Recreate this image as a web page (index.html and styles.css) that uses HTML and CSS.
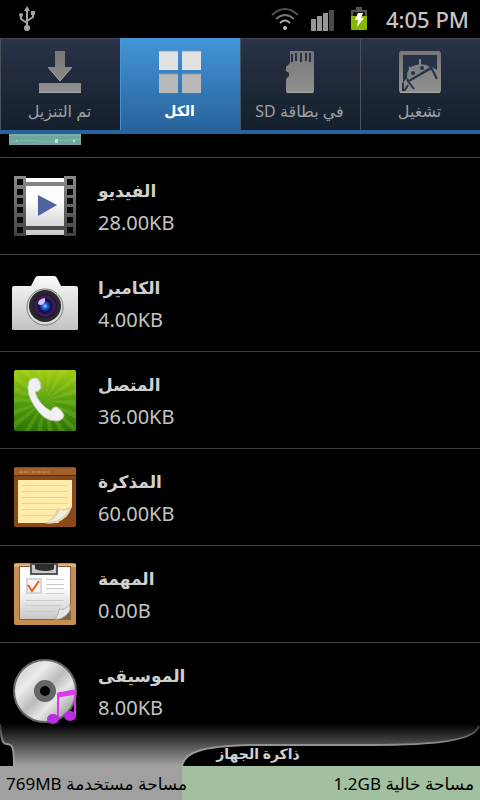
FILE: index.html
```html
<!DOCTYPE html>
<html lang="ar">
<head>
    <meta charset="UTF-8">
    <meta name="viewport" content="width=device-width, initial-scale=1.0">
    <title>ذاكرة الجهاز</title>
    <link rel="stylesheet" href="styles.css">
</head>
<body>
    <header class="status-bar">
        <svg class="usb" width="18" height="26" viewBox="0 0 18 26" fill="none" stroke="#a3a3a3" stroke-width="2">
            <path d="M9 3v19M9 17L3 13V9M9 15l6-4V8"/>
            <path d="M9 0l3 5H6zM13 5h4v4h-4z" fill="#a3a3a3" stroke="none"/>
            <circle cx="3" cy="9" r="2" fill="#a3a3a3" stroke="none"/>
            <circle cx="9" cy="22" r="3" fill="#a3a3a3" stroke="none"/>
        </svg>
        <div class="status-icons">
            <svg width="28" height="24" viewBox="0 0 28 24" fill="none" stroke-width="2">
                <path d="M1 8Q14-4 27 8" stroke="#505050"/>
                <path d="M5 12q9-8 18 0" stroke="#747474"/>
                <path d="M9 16q5-5 10 0" stroke="#aaa"/>
                <circle cx="14" cy="21" r="2" fill="#c4c4c4"/>
            </svg>
            <svg width="24" height="24" viewBox="0 0 24 24">
                <path d="M1 12h5v12H1zM7 9h5v15H7zM13 6h5v18h-5z" fill="#989898"/>
                <path d="M19 3h5v21h-5z" fill="#4b4b4b"/>
            </svg>
            <svg width="18" height="24" viewBox="0 0 18 24">
                <path d="M6 0h6v3h5v7H1V3h5z" fill="#555"/>
                <path d="M3 5h12v5H3z" fill="#161616"/>
                <path d="M1 9h16v13q0 1-1 1H2q-1 0-1-1z" fill="#86b800"/>
                <path d="M8 6h5l-2 5h3l-7 9 1-7H5z" fill="#fff"/>
            </svg>
            <span class="clock">4:05 PM</span>
        </div>
    </header>

    <nav class="tabs">
        <button class="tab" dir="rtl">
            <svg width="44" height="44" viewBox="0 0 44 44">
                <defs>
                    <linearGradient id="metal" x1="0" y1="0" x2="0" y2="1">
                        <stop offset="0" stop-color="#777"/>
                        <stop offset="1" stop-color="#909090"/>
                    </linearGradient>
                </defs>
                <path d="M17 1h10v16h7L22 31 10 17h7zM1 33h42v10H1z" fill="url(#metal)"/>
                <path d="M10 17l12 14 12-14M1 42.500h42" fill="none" stroke="#aaa"/>
            </svg>
            <span>تم التنزيل</span>
        </button>
        <button class="tab active" dir="rtl">
            <svg width="44" height="44" viewBox="0 0 44 44">
                <path d="M1 1h19v19H1zM24 1h19v19H24z" fill="#e2e2e2"/>
                <path d="M1 24h19v19H1zM24 24h19v19H24z" fill="#b9b9b9"/>
                <path d="M1 1h19M24 1h19M1 24h19M24 24h19" stroke="#8c9aa6"/>
            </svg>
            <span>الكل</span>
        </button>
        <button class="tab" dir="rtl">
            <svg width="44" height="44" viewBox="0 0 44 44">
                <path d="M12 1h22q2 0 2 2v38q0 2-2 2H10q-2 0-2-2V29l3-3v-3l-3-2v-4l4-4z" fill="url(#metal)"/>
                <path d="M14 4v8M18 3v8M23 3v9M28 3v8M32 3v9" stroke="#243044" stroke-width="2"/>
                <path d="M9 42.500h26" stroke="#aaa"/>
            </svg>
            <span>في بطاقة SD</span>
        </button>
        <button class="tab" dir="rtl">
            <svg width="44" height="44" viewBox="0 0 44 44">
                <rect x="1" y="1" width="42" height="42" rx="3" fill="url(#metal)"/>
                <path d="M5 5h34v15l-5-3L11 31l-3-2-3 4z" fill="#263247"/>
                <path d="M9 28q-1-11 9-13 9-2 14 2L11 30z" fill="#808080"/>
                <path d="M11 17l3 4M22 9v6" stroke="#888" stroke-width="2"/>
                <path d="M11 31l23-13M33 17l6 12M5 33v7h2l3-5M9 30l7 9" fill="none" stroke="#263247" stroke-width="2"/>
                <circle cx="15" cy="23" r="2" fill="#263247"/>
                <circle cx="24" cy="18" r="2" fill="#263247"/>
                <path d="M2 42.500h40" stroke="#aaa"/>
            </svg>
            <span>تشغيل</span>
        </button>
    </nav>

    <ul class="folders">
        <li class="folder partial">
            <svg width="72" height="12" viewBox="0 0 72 12">
                <rect width="72" height="11" fill="#6fa6a0"/>
                <path d="M0 1h72M0 8l20-2 18 2 34-3" stroke="#84b8b1" fill="none"/>
                <path d="M46 5h3v4h-3zM64 6h2v2h-2zM7 6h1v1H7z" fill="#b9dee3"/>
            </svg>
        </li>
        <li class="folder">
            <svg width="66" height="66" viewBox="0 0 66 66">
                <defs>
                    <linearGradient id="film" x1="0" y1="0" x2="0" y2="1">
                        <stop offset="0" stop-color="#8c8c8c"/>
                        <stop offset="1" stop-color="#424242"/>
                    </linearGradient>
                    <linearGradient id="white" x1="0" y1="0" x2="0" y2="1">
                        <stop offset="0.400" stop-color="#fdfdfd"/>
                        <stop offset="1" stop-color="#c9c9c9"/>
                    </linearGradient>
                </defs>
                <path d="M12 4h42v57H12z" fill="url(#white)"/>
                <path d="M2 2h12v60H2zM52 2h12v60H52zM14 8h38v4H14zM14 52h38v4H14z" fill="url(#film)"/>
                <path d="M5 5h6v6H5zM5 15h6v6H5zM5 24h6v6H5zM5 33h6v6H5zM5 43h6v6H5zM5 53h6v6H5zM55 5h6v6h-6zM55 15h6v6h-6zM55 24h6v6h-6zM55 33h6v6h-6zM55 43h6v6h-6zM55 53h6v6h-6z" fill="#080808"/>
                <path d="M26 21l19 10-19 11z" fill="#50649f"/>
            </svg>
            <div class="info"><bdi class="name">الفيديو</bdi><span class="size">28.00KB</span></div>
        </li>
        <li class="folder">
            <svg width="66" height="66" viewBox="0 -2 66 66">
                <defs>
                    <linearGradient id="body" x1="0" y1="0" x2="0" y2="1">
                        <stop offset="0" stop-color="#fafafa"/>
                        <stop offset="1" stop-color="#c2c2c2"/>
                    </linearGradient>
                    <radialGradient id="lens">
                        <stop offset="0" stop-color="#9fd8ff"/>
                        <stop offset="0.200" stop-color="#2865ee"/>
                        <stop offset="0.500" stop-color="#0b123b"/>
                        <stop offset="0.800" stop-color="#461a65"/>
                        <stop offset="1" stop-color="#161020"/>
                    </radialGradient>
                </defs>
                <path d="M2 13h17l4-8q1-2 3-2h16q2 0 3 2l4 8h15q2 0 2 2v41q0 1-2 1H2q-2 0-2-1V15q0-2 2-2z" fill="url(#body)"/>
                <circle cx="33" cy="34" r="18" fill="#dedede" stroke="#777"/>
                <circle cx="33" cy="33" r="16" fill="#292929"/>
                <circle cx="33" cy="33" r="12" fill="url(#lens)"/>
                <path d="M26 31q0-5 7-6v3q-1 4-5 4z" fill="#d9c6f2"/>
            </svg>
            <div class="info"><bdi class="name">الكاميرا</bdi><span class="size">4.00KB</span></div>
        </li>
        <li class="folder">
            <svg width="66" height="66" viewBox="0 0 66 66">
                <defs>
                    <linearGradient id="green" x1="0" y1="0" x2="0" y2="1">
                        <stop offset="0" stop-color="#a4cd13"/>
                        <stop offset="0.500" stop-color="#54a010"/>
                        <stop offset="1" stop-color="#2c7505"/>
                    </linearGradient>
                </defs>
                <rect x="2" y="2" width="62" height="61" rx="2" fill="url(#green)"/>
                <path d="M33 33L2 4v8zM33 33L10 2h6zM33 33L24 2h5zM33 33L36 2h5zM33 33L48 2h7zM33 33L64 6v7zM33 33l31-13v6zM33 33l31-1v6zM33 33l31 12v6zM33 33l31 26v4h-3zM33 33l20 30h-6zM33 33l8 30h-5zM33 33l-3 30h-5zM33 33L18 63h-6zM33 33L2 61v-7zM33 33L2 47v-5zM33 33L2 34v-5zM33 33L2 24v-5z" fill="#b8df42" opacity="0.200"/>
                <path d="M17 13q3-4 8-3 4 3 4 10-1 3-6 4 4 13 16 19 2-5 6-4 5 3 7 8-1 6-8 6-12 0-21-14Q13 25 17 13z" fill="#f1f1f1" stroke="#bdc7b6"/>
            </svg>
            <div class="info"><bdi class="name">المتصل</bdi><span class="size">36.00KB</span></div>
        </li>
        <li class="folder">
            <svg width="66" height="66" viewBox="0 0 66 66">
                <rect x="2" y="2" width="62" height="60" rx="2" fill="#884817"/>
                <path d="M2 3h62v7H2z" fill="#a4602b"/>
                <path d="M2 10.500h62" stroke="#5d2c0b"/>
                <path d="M7 7h11M20 7h17" stroke="#cb986c" stroke-dasharray="4 1"/>
                <path d="M6 15h54v27L46 58H6z" fill="#ffebaa"/>
                <path d="M10 20.500h46M10 26.500h46M10 32.500h46M10 38.500h46M10 44.500h38M10 50.500h32" stroke="#ead597"/>
                <path d="M32 58q11-4 13-15 7 3 15-2-3 12-14 16-8 3-14 1z" fill="#ddd4b4"/>
                <path d="M36 57q9-4 12-12 5 2 9-1-6 12-21 13z" fill="#f5efd9"/>
            </svg>
            <div class="info"><bdi class="name">المذكرة</bdi><span class="size">60.00KB</span></div>
        </li>
        <li class="folder">
            <svg width="66" height="66" viewBox="0 0 66 66">
                <rect x="2" y="1" width="62" height="62" rx="2" fill="#c68d50"/>
                <path d="M2 2h62v3H2z" fill="#e0b076"/>
                <path d="M7 4h52v54H7z" fill="#85623d"/>
                <path d="M8 5h50v38L44 57H8z" fill="url(#white)"/>
                <path d="M19 2h26v10H19z" fill="#cacaca" stroke="#555" stroke-width="2"/>
                <path d="M23 2h19v5q-3 2-9 2t-10-2z" fill="#2d2d2d"/>
                <rect x="14" y="16" width="16" height="16" fill="#d6d6d6"/>
                <rect x="16" y="18" width="12" height="12" fill="#f5f5f5"/>
                <path d="M16 23l4 6 7-10" fill="none" stroke="#ee5c13" stroke-width="2"/>
                <path d="M34 17.500h18M34 22.500h18M34 26.500h18M34 31.500h18M14 38.500h38M14 43.500h36M14 49.500h28" stroke="#ccc"/>
                <path d="M43 57q4-4 4-10 6 2 11-5v6q-4 7-11 9z" fill="#e6e6e6" stroke="#b4b4b4"/>
            </svg>
            <div class="info"><bdi class="name">المهمة</bdi><span class="size">0.00B</span></div>
        </li>
        <li class="folder">
            <svg width="66" height="66" viewBox="0 0 66 66">
                <defs>
                    <linearGradient id="disc" x1="0" y1="0" x2="1" y2="1">
                        <stop offset="0" stop-color="#bdbdbd"/>
                        <stop offset="0.300" stop-color="#ececec"/>
                        <stop offset="0.500" stop-color="#bbb"/>
                        <stop offset="0.650" stop-color="#e7e7e7"/>
                        <stop offset="1" stop-color="#777"/>
                    </linearGradient>
                </defs>
                <circle cx="33" cy="32" r="31" fill="url(#disc)" stroke="#686868" stroke-width="2"/>
                <circle cx="33" cy="32" r="8" fill="#000" stroke="#656565" stroke-width="6"/>
                <path d="M46 59V35l17-3v25" fill="none" stroke="#dc39ee" stroke-width="2"/>
                <path d="M46 36l17-3" stroke="#dc39ee" stroke-width="5"/>
                <ellipse cx="41" cy="60" rx="6" ry="5" fill="#b82ddf"/>
                <ellipse cx="58" cy="57" rx="6" ry="5" fill="#b82ddf"/>
            </svg>
            <div class="info"><bdi class="name">الموسيقى</bdi><span class="size">8.00KB</span></div>
        </li>
    </ul>

    <footer class="storage">
        <div class="storage-title" dir="rtl">
            <svg class="curve" viewBox="0 0 480 42" preserveAspectRatio="none">
                <defs>
                    <linearGradient id="fade" x1="0" y1="0" x2="0" y2="42" gradientUnits="userSpaceOnUse">
                        <stop offset="0" stop-color="#000"/>
                        <stop offset="1" stop-color="#a0a0a0"/>
                    </linearGradient>
                    <linearGradient id="edge" x1="0" y1="0" x2="0" y2="42" gradientUnits="userSpaceOnUse">
                        <stop offset="0" stop-color="#333"/>
                        <stop offset="0.500" stop-color="#939393"/>
                        <stop offset="1" stop-color="#a0a0a0"/>
                    </linearGradient>
                </defs>
                <rect width="480" height="42" fill="#000"/>
                <path d="M0 0C1 8 1 20 6 20C13 20 14 23 14 42H182C184 29 200 22 250 21H370C435 21 474 17 479 0z" fill="url(#fade)"/>
                <path d="M0 0C1 8 1 20 6 20C13 20 14 23 14 42M182 42C184 29 200 22 250 21H370C435 21 474 17 479 2" fill="none" stroke="url(#edge)" stroke-width="2"/>
            </svg>
            <span>ذاكرة الجهاز</span>
        </div>
        <div class="storage-bar">
            <div class="used" style="width: 38%"></div>
            <span class="label" dir="rtl">مساحة مستخدمة 769MB</span>
            <span class="label" dir="rtl">مساحة خالية 1.2GB</span>
        </div>
    </footer>
</body>
</html>
```
FILE: styles.css
```css
* {
    box-sizing: border-box;
}
body {
    margin: 0;
    height: 100vh;
    display: flex;
    flex-direction: column;
    overflow: hidden;
    position: relative;
    background: #000;
    color: #d0d0d0;
    font-family: "Noto Sans", "DejaVu Sans", sans-serif;
}
svg {
    display: block;
    flex-shrink: 0;
}
.status-bar {
    display: flex;
    justify-content: space-between;
    align-items: center;
    height: 38px;
    padding: 0 11px 0 18px;
}
.status-icons {
    display: flex;
    align-items: center;
    gap: 14px;
}
.status-icons svg:nth-child(2) {
    margin: 0 2px 0 -3px;
}
.clock {
    font-size: 22px;
    font-weight: 500;
    color: #c4c4c4;
    margin-left: 4px;
}
.tabs {
    display: grid;
    grid-template-columns: repeat(4, 1fr);
    height: 96px;
    border-bottom: 4px solid #28639c;
    flex-shrink: 0;
}
.tab {
    display: flex;
    flex-direction: column;
    align-items: center;
    gap: 5px;
    padding: 11px 2px 0 0;
    border: none;
    border-top: 1px solid #454c5c;
    border-left: 1px solid #4a525e;
    background: linear-gradient(#293247, #14202c);
    color: #a0a0a0;
    font-family: inherit;
    font-size: 16px;
    line-height: 24px;
    cursor: pointer;
}
.tab.active {
    border-color: #4394d8;
    background: linear-gradient(#4394d8, #28639c);
    color: #fff;
    font-size: 14px;
    font-weight: bold;
}
.folders {
    flex: 1;
    min-height: 0;
    overflow: hidden;
    margin: 0;
    padding: 0;
    list-style: none;
}
.folder {
    display: flex;
    align-items: center;
    gap: 20px;
    height: 97px;
    padding: 2px 12px 0;
    border-bottom: 1px solid #404040;
}
.folder.partial {
    height: 24px;
    padding: 0 9px;
    align-items: flex-start;
}
.info {
    display: flex;
    flex-direction: column;
    align-items: flex-start;
}
.name {
    font-size: 17px;
    line-height: 32px;
    font-weight: bold;
}
.size {
    font-size: 20px;
    line-height: 32px;
    color: #c4c4c4;
}
.storage {
    position: absolute;
    left: 0;
    right: 0;
    bottom: 0;
}
.storage-title {
    position: relative;
    display: flex;
    justify-content: center;
    align-items: flex-end;
    height: 42px;
    padding-left: 36px;
    font-size: 14px;
    line-height: 24px;
    font-weight: bold;
}
.storage-title span {
    position: relative;
}
.curve {
    position: absolute;
    top: 0;
    left: 0;
    width: 100%;
    height: 100%;
}
.storage-bar {
    position: relative;
    display: flex;
    justify-content: space-between;
    align-items: center;
    height: 34px;
    padding: 0 6px;
    background: #a1c09f;
    color: #000;
    font-size: 17px;
}
.used {
    position: absolute;
    top: 0;
    left: 0;
    height: 100%;
    background: #a0a0a0;
}
.label {
    position: relative;
}
```
